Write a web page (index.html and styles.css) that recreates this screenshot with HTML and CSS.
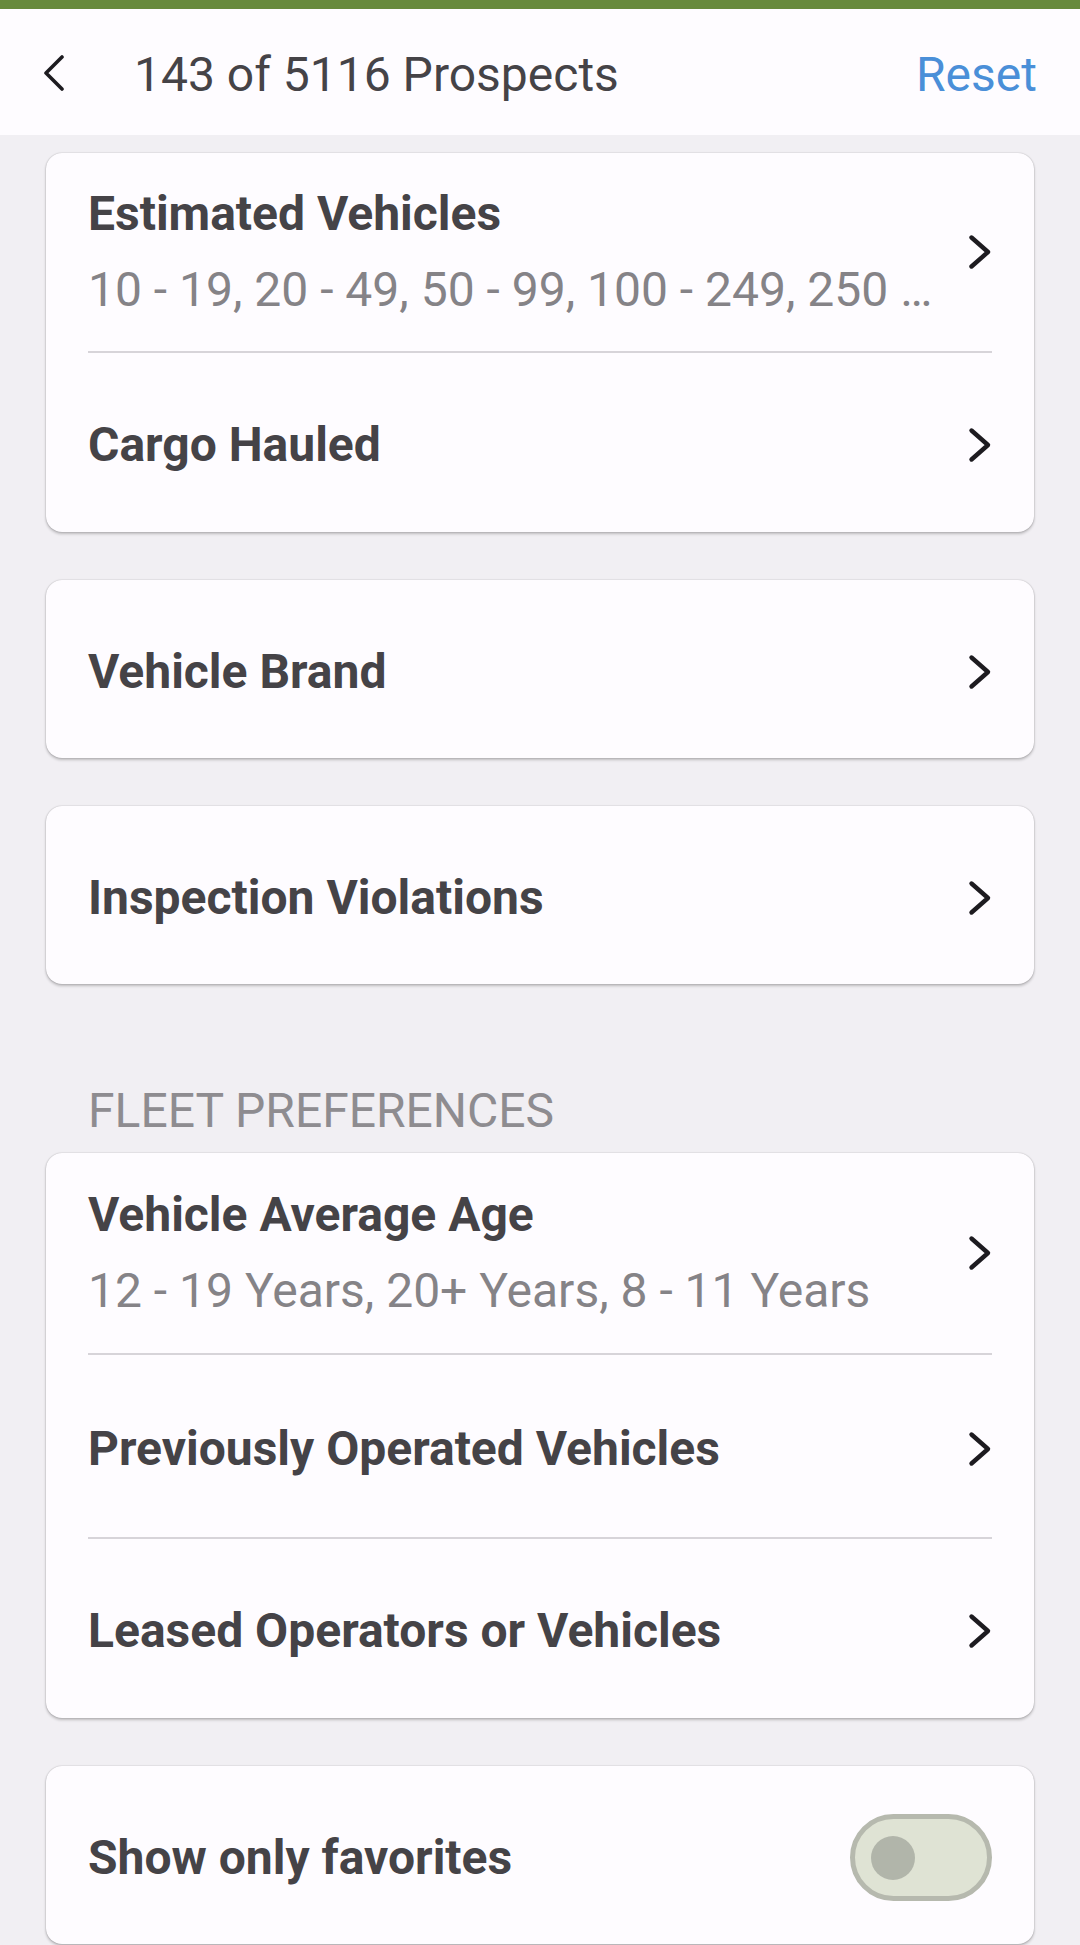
FILE: index.html
```html
<!DOCTYPE html>
<html lang="en">
<head>
<meta charset="utf-8">
<title>Filters</title>
<link rel="stylesheet" href="styles.css">
</head>
<body>
<div class="status-strip"></div>
<header class="topbar">
  <button class="back" aria-label="Back">
    <svg width="24" height="36" viewBox="0 0 24 36"><path d="M20 2 L4 18 L20 34" fill="none" stroke="#1d1b20" stroke-width="3.6" stroke-linecap="round" stroke-linejoin="round"/></svg>
  </button>
  <div class="title">143 of 5116 Prospects</div>
  <div class="reset">Reset</div>
</header>
<main class="content">
  <section class="card">
    <div class="row tall">
      <div class="text">
        <div class="label">Estimated Vehicles</div>
        <div class="value">10 - 19, 20 - 49, 50 - 99, 100 - 249, 250 - 499, 500 - 999, 1000+</div>
      </div>
      <svg class="chev" width="24" height="36" viewBox="0 0 24 36"><path d="M3.5 3.5 L20 18 L3.5 32.5" fill="none" stroke="#1d1b20" stroke-width="4.4" stroke-linecap="round" stroke-linejoin="round"/></svg>
    </div>
    <div class="row last">
      <div class="text"><div class="label">Cargo Hauled</div></div>
      <svg class="chev" width="24" height="36" viewBox="0 0 24 36"><path d="M3.5 3.5 L20 18 L3.5 32.5" fill="none" stroke="#1d1b20" stroke-width="4.4" stroke-linecap="round" stroke-linejoin="round"/></svg>
    </div>
  </section>
  <section class="card">
    <div class="row">
      <div class="text"><div class="label">Vehicle Brand</div></div>
      <svg class="chev" width="24" height="36" viewBox="0 0 24 36"><path d="M3.5 3.5 L20 18 L3.5 32.5" fill="none" stroke="#1d1b20" stroke-width="4.4" stroke-linecap="round" stroke-linejoin="round"/></svg>
    </div>
  </section>
  <section class="card">
    <div class="row">
      <div class="text"><div class="label">Inspection Violations</div></div>
      <svg class="chev" width="24" height="36" viewBox="0 0 24 36"><path d="M3.5 3.5 L20 18 L3.5 32.5" fill="none" stroke="#1d1b20" stroke-width="4.4" stroke-linecap="round" stroke-linejoin="round"/></svg>
    </div>
  </section>

  <h2 class="section-label">FLEET PREFERENCES</h2>

  <section class="card after-label">
    <div class="row tall taller">
      <div class="text">
        <div class="label">Vehicle Average Age</div>
        <div class="value">12 - 19 Years, 20+ Years, 8 - 11 Years</div>
      </div>
      <svg class="chev" width="24" height="36" viewBox="0 0 24 36"><path d="M3.5 3.5 L20 18 L3.5 32.5" fill="none" stroke="#1d1b20" stroke-width="4.4" stroke-linecap="round" stroke-linejoin="round"/></svg>
    </div>
    <div class="row mid">
      <div class="text"><div class="label">Previously Operated Vehicles</div></div>
      <svg class="chev" width="24" height="36" viewBox="0 0 24 36"><path d="M3.5 3.5 L20 18 L3.5 32.5" fill="none" stroke="#1d1b20" stroke-width="4.4" stroke-linecap="round" stroke-linejoin="round"/></svg>
    </div>
    <div class="row last">
      <div class="text"><div class="label">Leased Operators or Vehicles</div></div>
      <svg class="chev" width="24" height="36" viewBox="0 0 24 36"><path d="M3.5 3.5 L20 18 L3.5 32.5" fill="none" stroke="#1d1b20" stroke-width="4.4" stroke-linecap="round" stroke-linejoin="round"/></svg>
    </div>
  </section>

  <section class="card">
    <div class="row toggle-row">
      <div class="text"><div class="label">Show only favorites</div></div>
      <div class="switch"><div class="knob"></div></div>
    </div>
  </section>
</main>
</body>
</html>
```

FILE: styles.css
```css
* { box-sizing: border-box; }

html, body {
  margin: 0;
  padding: 0;
}

body {
  width: 1080px;
  min-height: 1945px;
  background: #f1eff3;
  font-family: Roboto, "Noto Sans", "Liberation Sans", sans-serif;
  color: #454347;
  overflow: hidden;
}

.status-strip {
  height: 9px;
  background: #678a3c;
}

.topbar {
  height: 126px;
  background: #fefcff;
  display: flex;
  align-items: center;
  padding: 6px 43px 0 42px;
}

.back {
  border: 0;
  background: none;
  padding: 0;
  margin: -4px 0 0 0;
  width: 24px;
  height: 36px;
  display: flex;
}

.title {
  margin-left: 68px;
  font-size: 48px;
  font-weight: 400;
  color: #454347;
  flex: 1;
  line-height: 56px;
}

.reset {
  font-size: 48px;
  color: #4a8fd8;
  line-height: 56px;
}

.content {
  padding: 18px 46px 0 46px;
  display: flex;
  flex-direction: column;
}

.card {
  background: #fefcff;
  border-radius: 16px;
  box-shadow: 0 2px 3px rgba(0, 0, 0, 0.22), 0 0 1.5px rgba(0, 0, 0, 0.28);
}

.card + .card {
  margin-top: 48px;
}

.card.after-label {
  margin-top: 0;
}

.row {
  margin: 0 42px;
  height: 178px;
  padding-top: 5px;
  display: flex;
  align-items: center;
  border-bottom: 2px solid #d7d4d9;
}

.row:last-child {
  border-bottom: 0;
}

.row.last {
  height: 179px;
}

.row.tall {
  height: 200px;
  padding-top: 0;
}

.row.taller {
  height: 202px;
}

.row.mid {
  height: 184px;
}

.text {
  flex: 1;
  min-width: 0;
  margin-right: 34px;
}

.label {
  font-size: 48px;
  font-weight: 700;
  line-height: 56px;
  color: #454347;
  white-space: nowrap;
}

.value {
  margin-top: 20px;
  font-size: 48px;
  font-weight: 400;
  line-height: 56px;
  color: #858387;
  white-space: nowrap;
  overflow: hidden;
  text-overflow: ellipsis;
}

.chev {
  flex: none;
}

.section-label {
  margin: 99px 0 14px 42px;
  font-size: 48px;
  font-weight: 400;
  line-height: 56px;
  color: #8e8c90;
  letter-spacing: 0;
}

.switch {
  flex: none;
  width: 142px;
  height: 87px;
  border: 5px solid #b6b9ae;
  border-radius: 44px;
  background: #dfe3d4;
  display: flex;
  align-items: center;
  padding-left: 16px;
}

.knob {
  width: 44px;
  height: 44px;
  border-radius: 50%;
  background: #b1b5aa;
}
```
